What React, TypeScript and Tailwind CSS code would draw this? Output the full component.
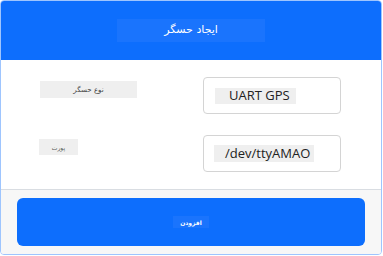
export default function App() {
  const fa = { fontFamily: '"DejaVu Sans", "Noto Sans", sans-serif' };
  const lat = { fontFamily: '"Open Sans", "Noto Sans", sans-serif' };

  return (
    <div className="w-[383px] h-[256px] bg-white">
      <div className="w-[382px] h-[255px] border border-[#9ec5fe] rounded-[4px] overflow-hidden flex flex-col bg-white">
        {/* Header */}
        <div className="h-[60px] bg-[#0d6efd] flex items-center justify-center">
          <div
            className="w-[148px] h-[23px] bg-[#1a74fd] flex items-center justify-center text-white text-[11px]"
            style={fa}
          >
            ایجاد حسگر
          </div>
        </div>

        {/* Body */}
        <div className="flex-1 bg-white pt-[17px] pb-[17px] flex flex-col gap-[21px] border-b border-[#d9dde2]">
          <div className="flex items-start">
            <div className="w-[39px] shrink-0" />
            <div className="w-[97px] h-[17px] mt-[4px] bg-[#efefef] flex items-center justify-center text-[7px] text-[#444]" style={fa}>
              نوع حسگر
            </div>
            <div className="w-[66px] shrink-0" />
            <div className="w-[138px] h-[37px] border border-[#d4d4d4] rounded-[4px] flex items-center pl-[11px]">
              <div className="w-[81px] h-[16px] bg-[#efefef] flex items-center pl-[14px] text-[13px] text-[#222]" style={lat}>
                UART GPS
              </div>
            </div>
          </div>

          <div className="flex items-start">
            <div className="w-[38px] shrink-0" />
            <div className="w-[39px] h-[16px] mt-[4px] bg-[#efefef] flex items-center justify-center text-[6px] text-[#555]" style={fa}>
              پورت
            </div>
            <div className="w-[125px] shrink-0" />
            <div className="w-[138px] h-[37px] border border-[#d4d4d4] rounded-[4px] flex items-center pl-[10px]">
              <div className="w-[100px] h-[17px] bg-[#efefef] flex items-center pl-[11px] text-[13px] text-[#222]" style={lat}>
                /dev/ttyAMAO
              </div>
            </div>
          </div>
        </div>

        {/* Footer */}
        <div className="h-[64px] bg-[#f7f7f7] px-[16px] pt-[8px] pb-[8px] flex">
          <div className="flex-1 bg-[#0d6efd] rounded-[6px] flex items-center justify-center">
            <div className="w-[36px] h-[12px] bg-[#1a74fd] flex items-center justify-center text-white text-[6px] font-bold" style={fa}>
              افزودن
            </div>
          </div>
        </div>
      </div>
    </div>
  );
}
